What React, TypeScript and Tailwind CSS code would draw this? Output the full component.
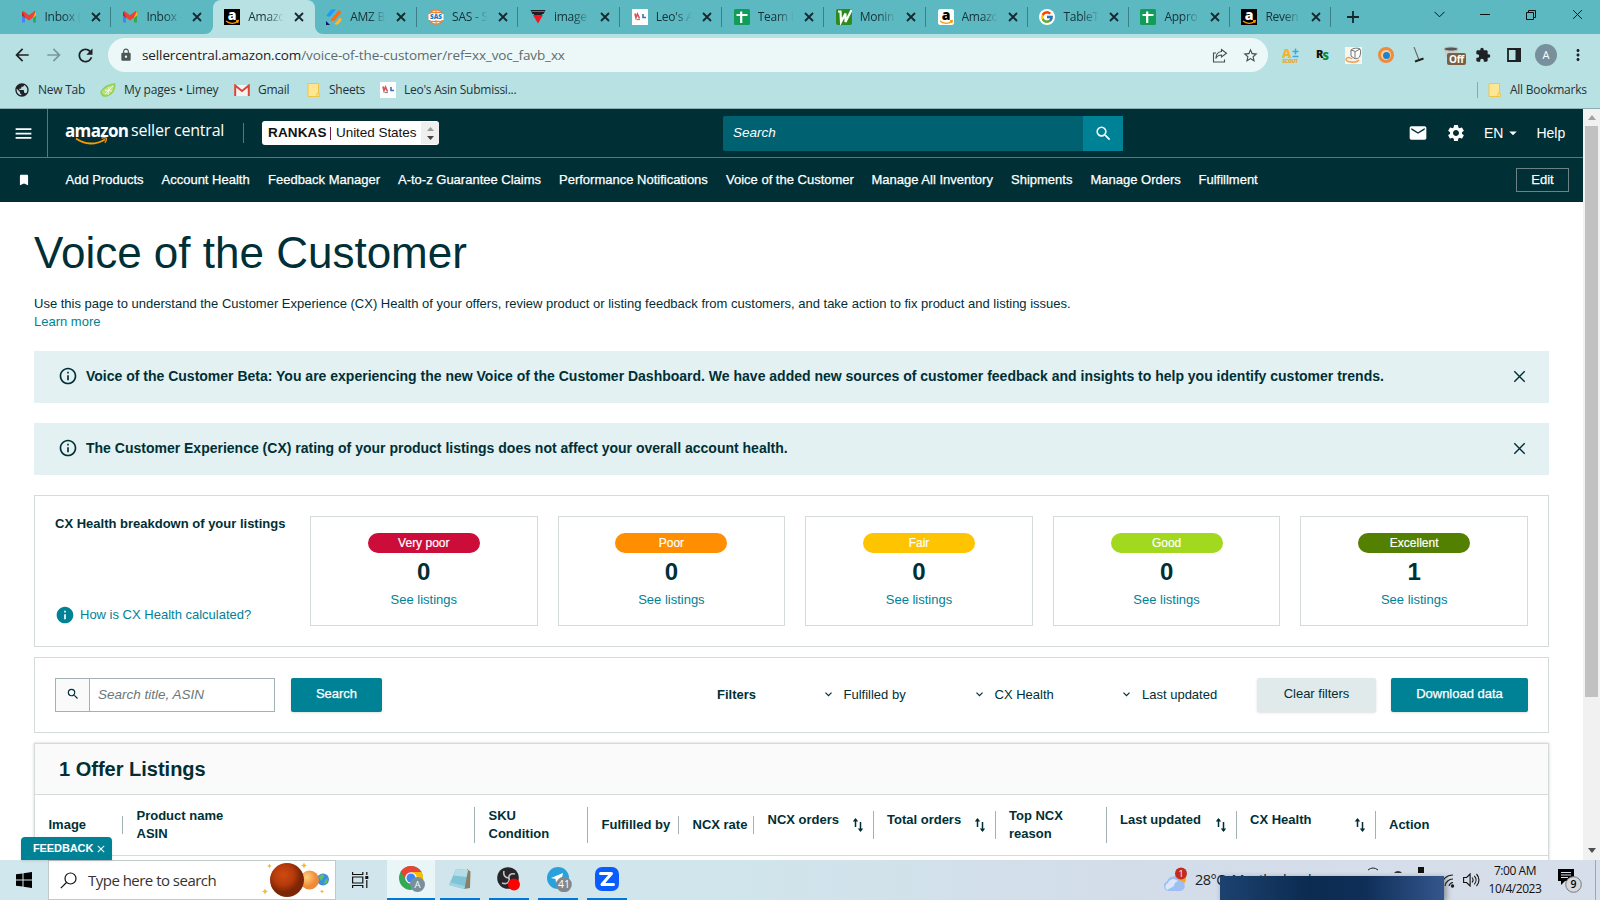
import type { ReactNode } from "react";
import {
  MdArrowBack, MdArrowForward, MdRefresh, MdLock, MdExtension, MdMoreVert, MdSearch, MdMail,
  MdSettings, MdBookmark, MdInfo, MdInfoOutline, MdStarBorder, MdPublic, MdArrowDropDown, MdMenu,
} from "react-icons/md";
import { FcGoogle } from "react-icons/fc";

const UI = "font-['Open_Sans','Noto_Sans',sans-serif]";

function Cross({ size = 10, className = "", w = 1.5 }: { size?: number; className?: string; w?: number }) {
  return (
    <svg width={size} height={size} viewBox="0 0 10 10" className={className} fill="none" stroke="currentColor" strokeWidth={w}>
      <path d="M1 1l8 8M9 1l-8 8" />
    </svg>
  );
}

function Gmail() {
  return (
    <svg width="16" height="16" viewBox="0 0 16 16">
      <path d="M1 5v8.5h3V6z" fill="#4285f4" />
      <path d="M15 5v8.5h-3V6z" fill="#34a853" />
      <path d="M12 4.5l3-1.7V6.5L12 9z" fill="#fbbc04" />
      <path d="M1 2.8L4 4.5V9L1 6.5z" fill="#c5221f" />
      <path d="M1.400 2.600c.6-.5 1.500-.3 2 .1L8 6.200l4.600-3.500c.5-.4 1.400-.6 2-.1L12 8.500 8 11.500 4 8.500z" fill="#ea4335" />
    </svg>
  );
}

function AmazonFav({ dark = false }: { dark?: boolean }) {
  return (
    <svg width="16" height="16" viewBox="0 0 16 16">
      <rect width="16" height="16" rx={dark ? 0 : 2.5} fill={dark ? "#000" : "#fff"} />
      <text x="8" y="10.500" textAnchor="middle" fontFamily="Open Sans" fontWeight="800" fontSize="14" fill={dark ? "#fff" : "#000"}>a</text>
      <path d="M2 12c3.500 3 8.500 3 11.500.5M12 11.800l2.300-.3-.6 2.300" fill="none" stroke="#f90" strokeWidth="1.300" />
    </svg>
  );
}

function SheetsFav() {
  return (
    <svg width="16" height="16" viewBox="0 0 16 16">
      <rect width="16" height="16" rx="1.500" fill="#0f9d58" />
      <path d="M7.200 2.500v11.500M2.500 6h11" stroke="#fff" strokeWidth="2.200" />
    </svg>
  );
}

function Leo() {
  return (
    <svg width="16" height="16" viewBox="0 0 16 16">
      <rect width="16" height="16" fill="#fff" />
      <path d="M3 4.500l1 4L5.500 5l2 4.500" fill="none" stroke="#d9555d" strokeWidth="1.700" />
      <path d="M4.500 10.500h3.500" stroke="#888" strokeWidth="1.200" />
      <path d="M11 5v3.500h3" fill="none" stroke="#3d6fb8" strokeWidth="1.600" />
    </svg>
  );
}

const tabs: { icon: ReactNode; text: string; line?: boolean; active?: boolean; narrow?: boolean }[] = [
  { icon: <Gmail />, text: "Inbox (", line: true },
  { icon: <Gmail />, text: "Inbox -" },
  { icon: <AmazonFav dark />, text: "Amazo", active: true },
  {
    icon: (
      <svg width="16" height="16" viewBox="0 0 16 16">
        <path d="M0.500 6.500L5 .8C6 0 8 0 10 0.500L4.500 7C3.500 8 1.500 8 .5 6.500z" fill="#1a9bff" />
        <path d="M4.500 11L12 2c1-1 3 0 3 1.500L9 11c-1.500 1.500-3.500 1.200-4.500 0z" fill="#ff6a13" />
        <path d="M8.500 15l5-6c1.500-.5 2.500 1 2 2.500L12.500 15c-1 1-3 1-4 0z" fill="#ffb52e" />
        <path d="M0 12l4 4H0z" fill="#10136b" />
      </svg>
    ),
    text: "AMZ B", line: true,
  },
  {
    icon: (
      <svg width="16" height="16" viewBox="0 0 16 16">
        <circle cx="8" cy="8" r="7.200" fill="#fde9d8" stroke="#ee8136" strokeWidth="1.300" />
        <path d="M8 1v14M3 3.500h10M3 12.500h10" stroke="#ee8136" />
        <rect x="0.500" y="5" width="15" height="6" fill="#fff" />
        <text x="8" y="10.200" textAnchor="middle" fontFamily="Open Sans" fontWeight="800" fontSize="6.500" fill="#1b7cc4">SAS</text>
      </svg>
    ),
    text: "SAS - S", line: true,
  },
  {
    icon: (
      <svg width="16" height="16" viewBox="0 0 16 16">
        <path d="M0.500 1h15l-2 4h-11z" fill="#231a24" />
        <path d="M1.500 2.500h13" stroke="#c4417b" strokeWidth="1" />
        <path d="M3 6h10L8 14.500z" fill="#f01827" />
        <path d="M4 5.500h8" stroke="#222" />
      </svg>
    ),
    text: "image", line: true,
  },
  { icon: <Leo />, text: "Leo's A", line: true },
  { icon: <SheetsFav />, text: "Team B", line: true },
  {
    icon: (
      <svg width="16" height="16" viewBox="0 0 16 16">
        <rect width="16" height="16" rx="2" fill="#2b8b1c" />
        <path d="M2 2.500h2.500L5 13 9.500 4.500 9.500 13 15.500 1" fill="none" stroke="#fff" strokeWidth="2.200" />
      </svg>
    ),
    text: "Monin", line: true,
  },
  { icon: <AmazonFav />, text: "Amazo", line: true },
  { icon: <span className="flex size-4 items-center justify-center rounded-full bg-white"><FcGoogle size={14} /></span>, text: "TableTo", line: true, narrow: true },
  { icon: <SheetsFav />, text: "Appro", line: true, narrow: true },
  { icon: <AmazonFav dark />, text: "Reven", line: true, narrow: true },
];

function Tab({ t }: { t: (typeof tabs)[number] }) {
  return (
    <div className={`relative flex h-full shrink-0 items-center pl-[11.500px] ${t.narrow ? "w-[101px]" : "w-[101.900px]"} ${t.active ? "rounded-t-lg bg-[#b8e1e4]" : ""}`}>
      {t.active && (
        <>
          <svg className="absolute bottom-0 -left-2" width="8" height="8"><path d="M8 0v8H0a8 8 0 0 0 8-8z" fill="#b8e1e4" /></svg>
          <svg className="absolute -right-2 bottom-0" width="8" height="8"><path d="M0 0v8h8a8 8 0 0 1-8-8z" fill="#b8e1e4" /></svg>
        </>
      )}
      {t.icon}
      <span className="ml-[8px] w-[38px] overflow-hidden text-[12px] tracking-[-0.25px] whitespace-nowrap text-[#163136] [mask-image:linear-gradient(to_right,black_50%,transparent_94%)]">
        {t.text}
      </span>
      <Cross className="ml-[8px] text-[#15292c]" size={10} w={1.8} />
      {t.line && <span className="absolute top-[7px] right-0 h-5 w-px bg-[#3a7e86]" />}
    </div>
  );
}

function Folder() {
  return (
    <svg width="13" height="16" viewBox="0 0 13 16">
      <path d="M1 1.500h10.500v9l.8.500v3.500H1z" fill="#ffe694" stroke="#eec544" />
      <path d="M10 14.500v-3.500h2" fill="none" stroke="#eec544" />
    </svg>
  );
}

function Chrome() {
  return (
    <div className={UI}>
      <div className="flex h-[34px] items-center bg-[#5cb8c1] pl-[9px]">
        {tabs.map((t, i) => <Tab key={i} t={t} />)}
        <svg className="ml-[16px]" width="12" height="12" viewBox="0 0 12 12"><path d="M6 0v12M0 6h12" stroke="#16282a" strokeWidth="1.800" /></svg>
        <div className="-mt-[5px] ml-auto flex w-[178px] items-center text-[#111]">
          <svg className="ml-[12px]" width="11" height="7" viewBox="0 0 11 7"><path d="M.5.800l5 5 5-5" fill="none" stroke="currentColor" /></svg>
          <span className="ml-[35px] h-px w-[10px] bg-[#111]" />
          <svg className="ml-[36px]" width="10" height="10" viewBox="0 0 10 10" fill="none" stroke="currentColor"><path d="M.5 2.500h7v7h-7zM2.500 2.500v-2h7v7h-2" /></svg>
          <Cross className="ml-[36px]" size={11} w={0.9} />
        </div>
      </div>
      <div className="flex h-[39px] items-center bg-[#b8e1e4] pt-[3px]">
        <MdArrowBack className="ml-[12px] text-[#202124]" size={20} />
        <MdArrowForward className="ml-[12px] text-[#7a979a]" size={20} />
        <MdRefresh className="ml-[11px] text-[#202124]" size={21} />
        <div className="ml-[12px] flex h-[34px] w-[1160px] items-center rounded-full bg-[#ecf8f8] text-[13.500px] text-[#5f6b6d]">
          <MdLock className="ml-[11px] text-[#4d5557]" size={14} />
          <span className="ml-[9px] w-[900px] tracking-[-0.11px] whitespace-nowrap"><span className="text-[#202124]">sellercentral.amazon.com</span>/voice-of-the-customer/ref=xx_voc_favb_xx</span>
          <svg className="ml-auto" width="16" height="15" viewBox="0 0 16 15" fill="none" stroke="#474f50" strokeWidth="1.100"><path d="M4 5H1.500v9H12.500V11.500M9.500 1.500l5 3.700-5 3.800V7C7 7 5 8 3.800 10.500 4 6.500 6 3.800 9.500 3.500z" /></svg>
          <MdStarBorder className="mr-[9px] ml-[14px] text-[#474f50]" size={17} />
        </div>
        <div className="ml-[14px] flex w-4 flex-col items-center">
          <svg width="17" height="17" viewBox="0 0 17 17" fontFamily="Open Sans" fontWeight="800">
            <text x="0" y="10.500" fontSize="13" fill="#f5b52b">A</text>
            <path d="M10.500 4.500h6M13.500 1.500v6M10.500 9.500h6" stroke="#32aee0" strokeWidth="1.500" />
            <text x="0.500" y="16" fontSize="5" textLength="15.500" fill="#eda11c">SCOUT</text>
          </svg>
        </div>
        <svg className="ml-[17px]" width="16" height="16" viewBox="0 0 16 16" fontFamily="Open Sans" fontWeight="800" fontSize="11">
          <text x="1" y="11" fill="#111">R</text><text x="7.500" y="13" fill="#0a8c3c">S</text>
        </svg>
        <svg className="ml-[14px]" width="17" height="17" viewBox="0 0 17 17">
          <rect width="17" height="17" fill="#f8f5ef" />
          <path d="M1 12c0 4 11 4 13 1M1 12c1-2 4-2 6 0" fill="none" stroke="#f0a45a" strokeWidth="1.600" />
          <path d="M6 3c2-2 7-2.500 9-1 1 2 .5 6-.5 8-1 1.500-4 2-5 1.500L6 9zM6 3l4.500 1.500L15 2M10 4.500v7" fill="#fff" stroke="#666" strokeWidth=".9" />
        </svg>
        <span className="ml-[16px] flex size-4 items-center justify-center rounded-full border-[3px] border-[#f08a3c] bg-[#ffd0a0]"><span className="size-[7px] rounded-full bg-[#1784d0]" /></span>
        <svg className="ml-[19px]" width="12" height="16" viewBox="0 0 12 16"><path d="M1 0l5 13" stroke="#666" strokeWidth="1.100" /><path d="M2 14.500l8.500-3" stroke="#222" strokeWidth="2" /></svg>
        <div className="relative ml-[18px] h-5 w-5">
          <svg width="16" height="18" viewBox="0 0 16 18"><path d="M1 4l1.500 8h11L15 4z" fill="#c9cfcf" /><ellipse cx="8" cy="4" rx="7" ry="2" fill="#555" stroke="#bbb" /></svg>
          <span className="absolute top-[8px] left-[4px] rounded-[2px] bg-[#7b5f45] px-[2px] text-[10px] leading-3 font-bold tracking-[-0.3px] text-white">Off</span>
        </div>
        <MdExtension className="ml-[12px] text-[#202124]" size={16} />
        <svg className="ml-[16px]" width="14" height="14" viewBox="0 0 14 14"><path d="M1 1h12v12H1z" fill="none" stroke="#202124" strokeWidth="1.800" /><path d="M8.500 0H14v14H8.500z" fill="#202124" /></svg>
        <span className="ml-[14px] flex size-[22px] items-center justify-center rounded-full bg-[#78909c] text-[11px] text-white">A</span>
        <MdMoreVert className="ml-[12px] text-[#202124]" size={18} />
      </div>
      <div className="flex h-[36px] items-center border-b border-[#90aeb1] bg-[#b8e1e4] pb-[1px] text-[12px] tracking-[-0.25px] whitespace-nowrap text-[#233335]">
        <MdPublic className="ml-[14px] text-[#202124]" size={16} />
        <span className="ml-[8px] w-[62px]">New Tab</span>
        <svg width="16" height="14" viewBox="0 0 16 14"><path d="M1 9C3 5 9 1 14.500 1c1 6-3 11-8 12-3 .5-5-1.500-5.500-4z" fill="#b9e07e" stroke="#8fd04f" strokeWidth="1.500" /><path d="M13 3L5 11M12 8l-7-1M9 4l-1 8" stroke="#eef8da" /></svg>
        <span className="ml-[8px] w-[110px] tracking-[-0.15px]">My pages • Limey</span>
        <svg width="16" height="12" viewBox="0 0 16 12"><path d="M1 1h14v11H1z" fill="#f3f3f3" /><path d="M1.200 12V1.500L8 7l6.800-5.500V12" fill="none" stroke="#dc4537" strokeWidth="2" /></svg>
        <span className="ml-[8px] w-[49px]">Gmail</span>
        <Folder />
        <span className="ml-[9px] w-[51px]">Sheets</span>
        <Leo />
        <span className="ml-[8px]">Leo's Asin Submissi...</span>
        <span className="ml-auto h-4 w-px bg-[#86aaad]" />
        <span className="ml-[10px]"><Folder /></span>
        <span className="ml-[9px] w-[90px]">All Bookmarks</span>
      </div>
    </div>
  );
}

const nav = [
  ["Add Products", "w-[96px]"],
  ["Account Health", "w-[106.500px]"],
  ["Feedback Manager", "w-[130px]"],
  ["A-to-z Guarantee Claims", "w-[161px]"],
  ["Performance Notifications", "w-[167px]"],
  ["Voice of the Customer", "w-[145.500px]"],
  ["Manage All Inventory", "w-[139.500px]"],
  ["Shipments", "w-[79.500px]"],
  ["Manage Orders", "w-[108px]"],
  ["Fulfillment", "w-[80px]"],
];

function Header() {
  return (
    <header className="h-[93px] bg-[#002f36] text-white">
      <div className="flex h-[49px] items-center border-b border-[#5f7679]">
        <div className="flex h-full w-12 items-center justify-center border-r border-[#5f7679]"><MdMenu size={21} /></div>
        <div className={`relative ml-[17px] flex h-[26px] w-[162px] items-start whitespace-nowrap ${UI}`}>
          <span className="w-[66px] text-[17px] leading-[22px] font-bold tracking-[-0.65px]">amazon</span>
          <span className="text-[16px] leading-[21px] tracking-[-0.2px]">seller central</span>
          <svg className="absolute top-[17px] left-[10px]" width="34" height="9" viewBox="0 0 34 9" fill="none" stroke="#f90">
            <path d="M1 1.500c9 6.500 20 6.500 29 1" strokeWidth="1.800" />
            <path d="M26.500 1.200c2-.6 4-.6 4.800 0 .3 1.500-.5 3.500-1.500 4.600" strokeWidth="1.300" />
          </svg>
        </div>
        <span className="ml-[16px] h-5 w-px bg-[#5f7679]" />
        <div className="ml-[18px] flex h-6 w-[177px] items-center rounded-[3px] bg-white pl-[6px] text-[14px] whitespace-nowrap text-[#111]">
          <b className="w-[58px] text-[13.500px] tracking-[0.15px]">RANKAS</b>
          <span className="mr-[3px] ml-[4px] h-[13px] w-px bg-[#701c50]" />
          <span className="ml-[2px] text-[13.500px] tracking-[-0.05px]">United States</span>
          <span className="ml-auto flex h-[22px] w-[18px] flex-col items-center justify-center gap-[5px] rounded-r-[3px] bg-[#efefef]">
            <svg width="7" height="4"><path d="M0 4L3.500 0 7 4z" fill="#999" /></svg>
            <svg width="7" height="4"><path d="M0 0L3.500 4 7 0z" fill="#444" /></svg>
          </span>
        </div>
        <div className="ml-[284px] flex h-[35px] w-[400px] items-center rounded-[2px] bg-[#006171] pl-[10px] text-[13.500px] italic">
          Search
          <span className="ml-auto flex h-full w-10 items-center justify-center bg-[#008296]"><MdSearch size={19} /></span>
        </div>
        <MdMail className="ml-[285px]" size={20} />
        <MdSettings className="ml-[18px]" size={20} />
        <span className="ml-[18px] text-[14px]">EN</span>
        <MdArrowDropDown className="ml-[1px]" size={18} />
        <span className="ml-[14px] text-[14px]">Help</span>
      </div>
      <div className="flex h-[43px] items-center text-[13px] whitespace-nowrap [-webkit-text-stroke:0.25px_white]">
        <span className="w-[65.500px] pl-[17px]"><MdBookmark size={14} /></span>
        {nav.map(([t, w]) => <span key={t} className={w}>{t}</span>)}
        <span className="mr-[14px] ml-auto flex h-6 w-[53px] items-center justify-center border border-[#6d8285]">Edit</span>
      </div>
    </header>
  );
}

function Banner({ children }: { children: string }) {
  return (
    <div className="mb-5 flex h-[52px] items-center bg-[#e3f1f2] pr-[23px] pb-[2px] pl-[24px]">
      <MdInfoOutline size={20} />
      <b className="ml-[8px] text-[14px] whitespace-nowrap">{children}</b>
      <Cross className="ml-auto" size={13} w={1.1} />
    </div>
  );
}

const health = [
  ["Very poor", "0", "bg-[#cc0c39]"],
  ["Poor", "0", "bg-[#ff8f00]"],
  ["Fair", "0", "bg-[#ffc400]"],
  ["Good", "0", "bg-[#a2d81e]"],
  ["Excellent", "1", "bg-[#538000]"],
];

function Filter({ label, className }: { label: string; className: string }) {
  return (
    <span className={`flex items-center ${className}`}>
      <svg width="7" height="5" viewBox="0 0 7 5"><path d="M.5.700l3 3 3-3" fill="none" stroke="currentColor" strokeWidth="1.200" /></svg>
      <span className="ml-[12px]">{label}</span>
    </span>
  );
}

function Sort() {
  return (
    <svg className="mt-[6px] mr-[9px] ml-auto" width="12" height="16" viewBox="0 0 12 16" fill="none" stroke="currentColor" strokeWidth="1.500">
      <path d="M3.500 10V2M8.500 5v9" />
      <path d="M.8 4.500L3.500 1l2.700 3.500zM5.800 11.500l2.700 3.500 2.700-3.500z" fill="currentColor" stroke="none" />
    </svg>
  );
}

const columns: { lines: string[]; w: string; line: string; sort?: boolean }[] = [
  { lines: ["Image"], w: "w-[88px]", line: "h-[18px]" },
  { lines: ["Product name", "ASIN"], w: "w-[352px]", line: "h-[36px]" },
  { lines: ["SKU", "Condition"], w: "w-[113px]", line: "h-[36px]" },
  { lines: ["Fulfilled by"], w: "w-[91px]", line: "h-[18px]" },
  { lines: ["NCX rate"], w: "w-[75px]", line: "h-[18px]" },
  { lines: ["NCX orders"], w: "w-[119.500px]", line: "h-[28px]", sort: true },
  { lines: ["Total orders"], w: "w-[122px]", line: "h-[28px]", sort: true },
  { lines: ["Top NCX", "reason"], w: "w-[111px]", line: "h-[36px]" },
  { lines: ["Last updated"], w: "w-[130px]", line: "h-[28px]", sort: true },
  { lines: ["CX Health"], w: "w-[139px]", line: "h-[28px]", sort: true },
  { lines: ["Action"], w: "w-[120px]", line: "h-0" },
];

function Page() {
  return (
    <main className="h-[658px] overflow-hidden px-[34px] text-[13px]">
      <h1 className="mt-[27px] text-[44px] leading-[48px] whitespace-nowrap">Voice of the Customer</h1>
      <p className="mt-[18px] leading-[18px] whitespace-nowrap">Use this page to understand the Customer Experience (CX) Health of your offers, review product or listing feedback from customers, and take action to fix product and listing issues.</p>
      <p className="mb-[20px] leading-[18px] text-[#008296]">Learn more</p>
      <Banner>Voice of the Customer Beta: You are experiencing the new Voice of the Customer Dashboard. We have added new sources of customer feedback and insights to help you identify customer trends.</Banner>
      <Banner>The Customer Experience (CX) rating of your product listings does not affect your overall account health.</Banner>
      <section className="flex h-[152px] gap-5 border border-[#d5dbdb] px-5 py-5">
        <div className="-mt-[1px] flex w-[235px] flex-col justify-between pb-[1px]">
          <b className="-mr-3 leading-[18px] whitespace-nowrap">CX Health breakdown of your listings</b>
          <span className="flex items-center text-[#008296]"><MdInfo size={20} /><span className="ml-[5px]">How is CX Health calculated?</span></span>
        </div>
        {health.map(([label, n, bg]) => (
          <div key={label} className="flex h-[110px] flex-1 flex-col items-center border border-[#d5dbdb] pt-[16px]">
            <span className={`flex h-5 w-28 items-center justify-center rounded-full text-[12px] text-white [-webkit-text-stroke:0.2px_white] ${bg}`}>{label}</span>
            <b className="mt-[5px] text-[24px] leading-[28px]">{n}</b>
            <span className="mt-[5px] leading-[18px] text-[#008296]">See listings</span>
          </div>
        ))}
      </section>
      <section className="mt-[10px] flex h-[76px] items-center border border-[#d5dbdb] px-5">
        <div className="flex h-[34px] w-[220px] border border-[#a2b1b3]">
          <span className="flex w-[34px] items-center justify-center border-r border-[#a2b1b3] bg-[#fafafa] pb-[2px]"><MdSearch size={14} /></span>
          <span className="flex items-center pl-[8px] text-[13.500px] text-[#6c7778] italic">Search title, ASIN</span>
        </div>
        <button className="ml-4 h-[34px] w-[91px] rounded-[2px] bg-[#008296] pb-[2px] text-[13px] text-white shadow-sm [-webkit-text-stroke:0.25px_white]">Search</button>
        <div className="ml-[335px] flex h-[34px] items-center pb-[1px] whitespace-nowrap">
          <b className="w-[107.500px]">Filters</b>
          <Filter label="Fulfilled by" className="w-[151px]" />
          <Filter label="CX Health" className="w-[147.500px]" />
          <Filter label="Last updated" className="w-[95px]" />
        </div>
        <button className="ml-auto h-[34px] w-[119px] rounded-[2px] bg-[#e1eaeb] pb-[2px] shadow-sm">Clear filters</button>
        <button className="ml-[15px] h-[34px] w-[137px] rounded-[2px] bg-[#008296] pb-[2px] text-white shadow-sm [-webkit-text-stroke:0.25px_white]">Download data</button>
      </section>
      <section className="mt-[10px] h-[140px] border border-[#d5dbdb] shadow-[0_0_3px_rgba(0,0,0,0.18)]">
        <h2 className="flex h-[51px] items-center border-b border-[#d5dbdb] bg-[#fafafa] pl-6 text-[20px] font-bold">1 Offer Listings</h2>
        <div className="flex h-[61px] items-center border-b border-[#d5dbdb] leading-[18px] font-bold whitespace-nowrap">
          {columns.map((c) => (
            <div key={c.lines[0]} className={`flex shrink-0 items-center ${c.w}`}>
              <div className={`flex w-full pl-[13.500px] ${c.sort ? "-mt-[2px] h-[26px]" : ""}`}>
                <span>{c.lines.map((l) => <span key={l} className="block">{l}</span>)}</span>
                {c.sort && <Sort />}
              </div>
              <span className={`w-px shrink-0 bg-[#a2b1b3] ${c.line}`} />
            </div>
          ))}
        </div>
      </section>
    </main>
  );
}

function Scrollbar() {
  return (
    <div className="flex w-[17px] flex-col items-center bg-[#f1f1f1]">
      <svg className="mt-[6px] shrink-0" width="8" height="5"><path d="M0 5L4 0 8 5z" fill="#a3a3a3" /></svg>
      <div className="mt-[6px] h-[571px] w-[13px] shrink-0 bg-[#c1c1c1]" />
      <svg className="mt-auto mb-[7px] shrink-0" width="8" height="5"><path d="M0 0L4 5 8 0z" fill="#505050" /></svg>
    </div>
  );
}

function Star({ x, y, s }: { x: number; y: number; s: number }) {
  return <path transform={`translate(${x} ${y}) scale(${s})`} d="M0-3L.9-.9 3 0 .9.900 0 3-.9.900-3 0-.9-.9z" fill="#f0bb32" />;
}

function Task({ children, w, ml, active = false }: { children: ReactNode; w: string; ml: string; active?: boolean }) {
  return (
    <div className={`flex h-full items-center justify-center border-b-2 border-[#0078d7] ${w} ${ml} ${active ? "bg-[#eaf5f8]" : ""}`}>{children}</div>
  );
}

function Taskbar() {
  return (
    <footer className={`relative flex h-[40px] items-center overflow-hidden bg-[linear-gradient(to_right,#d0e7ed,#d0e5ec_45%,#d3dde9_70%,#d6deea)] ${UI}`}>
      <svg className="ml-[16px] shrink-0" width="16" height="16" viewBox="0 0 16 16"><path d="M0 2.300l6.500-.9v6.100H0zM7.500 1.200L16 0v7.500H7.500zM0 8.500h6.500v6.100L0 13.700zM7.500 8.500H16V16l-8.500-1.200z" /></svg>
      <div className="ml-[16px] flex h-full w-[288px] shrink-0 items-center border border-[#c3c9cb] bg-white">
        <svg className="ml-[11px]" width="17" height="17" viewBox="0 0 17 17" fill="none" stroke="#111" strokeWidth="1.200"><circle cx="10.500" cy="6.500" r="5.500" /><path d="M6.500 10.500L.8 16.200" /></svg>
        <span className="ml-[11px] w-[173px] text-[15px] tracking-[-0.52px] whitespace-nowrap text-[#333]">Type here to search</span>
        <svg width="70" height="38" viewBox="261 861 70 38">
          <defs>
            <radialGradient id="red" cx="40%" cy="35%"><stop offset="0" stopColor="#cf4a12" /><stop offset=".6" stopColor="#b53a0b" /><stop offset="1" stopColor="#7d2606" /></radialGradient>
            <radialGradient id="ora" cx="35%" cy="35%"><stop offset="0" stopColor="#ffd27d" /><stop offset="1" stopColor="#f08a36" /></radialGradient>
          </defs>
          <circle cx="323" cy="879.500" r="6" fill="#3b8fe0" />
          <path d="M319 877c2-3 5-3 5-1s-2 3-3 5zM325 880l3-2-1 5-3 1z" fill="#62bd67" />
          <circle cx="309.500" cy="880" r="9.500" fill="url(#ora)" />
          <circle cx="287" cy="880" r="17" fill="url(#red)" />
          <Star x={269.500} y={866} s={0.8} /><Star x={304} y={865.500} s={1} /><Star x={265} y={891.500} s={1} /><Star x={322} y={891.500} s={0.7} />
        </svg>
      </div>
      <svg className="ml-[16px] shrink-0" width="17" height="16" viewBox="0 0 17 16" fill="none" stroke="#111" strokeWidth="1.200"><path d="M.6 0v2.500h10.200V0M.6 5h10.200v6H.6zM.6 16v-2.500h10.200V16M14.800 0v3M14.800 8v8" /><path d="M13.300 4h3v3h-3z" fill="#111" stroke="none" /></svg>
      <Task w="w-[48px]" ml="ml-[18px]" active>
        <svg className="ml-[1.500px]" width="26" height="26" viewBox="0 0 26 26">
          <circle cx="12" cy="12" r="12" fill="#34a853" />
          <path d="M1.600 6A12 12 0 0 1 22.400 6H12L8 14z" fill="#ea4335" />
          <path d="M12 6h10.400A12 12 0 0 1 12 24l5-9z" fill="#fbbc04" />
          <circle cx="12" cy="12" r="5.800" fill="#fff" /><circle cx="12" cy="12" r="4.500" fill="#4285f4" />
          <circle cx="18.500" cy="18.500" r="7.500" fill="#78909c" />
          <text x="18.500" y="22" textAnchor="middle" fontSize="9.500" fontFamily="Open Sans" fill="#fff">A</text>
        </svg>
      </Task>
      <Task w="w-[40px]" ml="ml-[5px]">
        <svg width="24" height="24" viewBox="0 0 24 24"><path d="M19 2l3.500 2.500L22 21l-6 1z" fill="#8a8067" /><path d="M8 2l12 1-3.500 19L1 18z" fill="#7fc3d6" /><path d="M8 2l12 1-1.500 7L5.500 8.500z" fill="#b4dde6" /><path d="M1 18l15 4 1-3L2.500 15.500z" fill="#9fd3e0" /></svg>
      </Task>
      <Task w="w-[40px]" ml="ml-[9px]">
        <svg width="24" height="24" viewBox="0 0 24 24"><circle cx="11" cy="11" r="10.800" fill="#26262a" /><path d="M7 4c-1 4 1 7 5 7M18 7c-4-1-7 1-6 5M5 16c5 2 8-1 7-5" fill="none" stroke="#c4c4c8" strokeWidth="1.600" /><circle cx="17" cy="17.500" r="6" fill="#f00" /></svg>
      </Task>
      <Task w="w-[40px]" ml="ml-[9px]">
        <svg className="ml-[2px]" width="26" height="26" viewBox="0 0 26 26"><circle cx="12" cy="12" r="11" fill="#2aa1dc" /><path d="M5 12l12-5-2 10-3-2.500-2 2-.5-3.500z" fill="#fff" /><circle cx="18" cy="18.500" r="7.800" fill="#84888b" /><text x="18" y="22.300" textAnchor="middle" fontSize="10.500" fontFamily="Open Sans" fill="#fff">41</text></svg>
      </Task>
      <Task w="w-[40px]" ml="ml-[9px]">
        <svg width="24" height="24" viewBox="0 0 24 24"><rect width="24" height="24" rx="7" fill="#0b5cff" /><path d="M5.500 6.500h11L7 17.500H18.500" fill="none" stroke="#fff" strokeWidth="3" strokeLinecap="round" strokeLinejoin="round" /></svg>
      </Task>
      <svg className="ml-[535px] shrink-0" width="26" height="26" viewBox="0 0 26 26">
        <circle cx="18" cy="12" r="6" fill="#f7a325" />
        <path d="M6 24a5 5 0 0 1-1-9.500 7 7 0 0 1 13-1 5.400 5.400 0 0 1 1 10.500z" fill="#9dbff2" /><path d="M5 23a4 4 0 0 1 1-7 6 6 0 0 1 10-2c-3 1-4 3-4 5z" fill="#dbe8fc" />
        <circle cx="19" cy="6.500" r="6" fill="#c42b1c" /><text x="19" y="9.700" textAnchor="middle" fontSize="9" fontFamily="Open Sans" fill="#fff">1</text>
      </svg>
      <span className="ml-[7px] w-[170px] shrink-0 text-[14.500px] tracking-[-0.5px] whitespace-nowrap text-[#222]">28°C&nbsp; Mostly cloudy</span>
      <svg className="-mt-3 shrink-0" width="70" height="20" viewBox="0 0 70 20"><path d="M3 6a8 8 0 0 1 10 0" fill="none" stroke="#222" /><path d="M29 9a5 5 0 0 1 8 0z" fill="#333" /><path d="M53 3h6v6h-6z" fill="#111" /></svg>
      <svg className="ml-[5px] shrink-0" width="15" height="15" viewBox="0 0 15 15" fill="none" stroke="#222" strokeWidth="1.100"><path d="M1 13A12 12 0 0 1 13 2M5 13a8 8 0 0 1 8-7M9 13a4.500 4.500 0 0 1 4-3.500" /><circle cx="12.500" cy="13" r="1.200" fill="#222" /></svg>
      <svg className="ml-[8px] shrink-0" width="17" height="14" viewBox="0 0 17 14" fill="none" stroke="#111" strokeWidth="1.100"><path d="M.6 4.500h3l3.500-3.500v12L3.600 9.500h-3zM9 4.500c1.300 1.500 1.300 3.500 0 5M11.300 2.800c2.300 2.500 2.300 6 0 8.500M13.500 1c3.300 3.500 3.300 8.500 0 12" /></svg>
      <div className="ml-[8px] flex w-[54px] shrink-0 flex-col items-center text-[12px] leading-[18px] tracking-[-0.45px] whitespace-nowrap text-[#111]"><span>7:00 AM</span><span>10/4/2023</span></div>
      <svg className="ml-[15px] shrink-0" width="26" height="26" viewBox="0 0 26 26"><path d="M1 2h16v12H8l-4 4v-4H1z" /><path d="M4 5.500h10M4 8h10M4 10.500h7" stroke="#d6deea" strokeWidth="1.100" /><circle cx="16.500" cy="17.500" r="7.800" fill="#d5d8dc" stroke="#777" /><text x="16.500" y="21.300" textAnchor="middle" fontSize="10.500" fontFamily="Open Sans" fontWeight="600">9</text></svg>
      <div className="absolute top-[16px] left-[1220px] h-[24px] w-[224px] bg-[linear-gradient(to_right,#1d4270,#0b2b50_40%,#0f2f59_65%,#35568d)] shadow-[2px_2px_6px_rgba(0,0,0,0.4)]" />
      <span className="absolute top-0 right-[4px] h-full w-px bg-[#a0a8b2]" />
    </footer>
  );
}

export default function App() {
  return (
    <div className="relative h-[900px] w-[1600px] overflow-hidden bg-white font-['Liberation_Sans',Arial,sans-serif] text-[#002f36]">
      <Chrome />
      <div className="flex h-[751px]">
        <div className="w-[1583px]">
          <Header />
          <Page />
        </div>
        <Scrollbar />
      </div>
      <Taskbar />
      <div className="absolute top-[837px] left-[21px] flex h-[23px] w-[91px] items-center rounded-t-[4px] bg-[#008296] pl-[12px] text-[11px] font-bold text-white shadow">
        <span className="w-[64px] tracking-[-0.1px]">FEEDBACK</span>
        <Cross size={8} w={1.3} />
      </div>
    </div>
  );
}
